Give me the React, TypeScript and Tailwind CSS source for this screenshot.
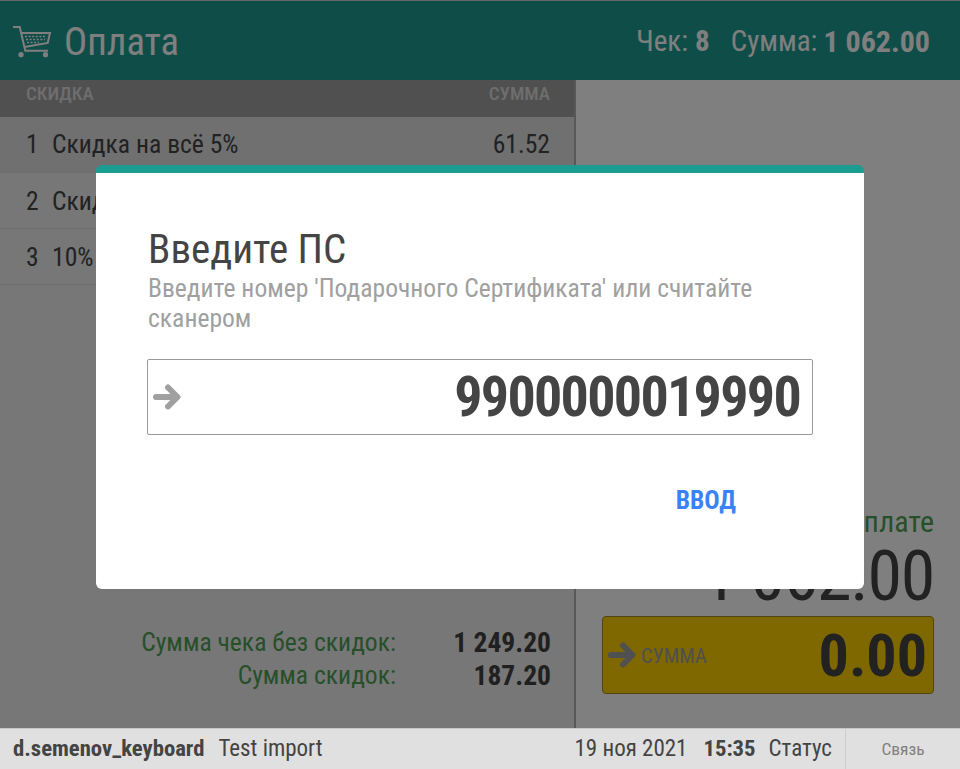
import React from "react";

const Arrow = ({ className }: { className: string }) => (
  <svg viewBox="0 0 28 28" className={className} fill="none" stroke="currentColor" strokeWidth="6" strokeLinecap="round" strokeLinejoin="round">
    <path d="M3 14H24M15 4.5L24.5 14L15 23.5" />
  </svg>
);

const Cart = () => (
  <svg viewBox="0 0 50 46" className="w-[50px] h-[46px] shrink-0" fill="none" stroke="#ffffff" strokeWidth="2">
    <path d="M6 9H12.7L18.3 32.7H41" />
    <path d="M14.5 15H43L40.7 25L17.5 29" />
    <path d="M18 18.5H39M19 21.5H38M20 24.5H32" strokeWidth="1.6" strokeDasharray="2 1.6" />
    <circle cx="14" cy="36.7" r="2.6" fill="#ffffff" stroke="none" />
    <circle cx="38.5" cy="36.7" r="2.6" fill="#ffffff" stroke="none" />
  </svg>
);

const rows = [
  ["1", "Скидка на всё 5%", "61.52", "bg-[#e0e0e0]", ""],
  ["2", "Скидка", "", "bg-[#eeeeee]", "pt-[1px]"],
  ["3", "10%", "", "bg-[#eeeeee]", "pt-[1px]"],
];

export default function App() {
  return (
    <div className="relative w-[960px] h-[769px] overflow-hidden bg-white flex flex-col font-['Roboto',sans-serif] font-stretch-condensed">
      <header className="h-[80px] shrink-0 bg-[#1f9b92] border-t border-[#cccccc] flex items-center justify-between pl-[7px] pr-[30px] text-white">
        <div className="flex items-center gap-[7px]">
          <Cart />
          <span className="text-[38.5px] leading-none pt-[3px]">Оплата</span>
        </div>
        <div className="flex items-center text-[29px] leading-none pt-[2px]">
          <span>Чек:</span>
          <b className="ml-[7px] font-bold">8</b>
          <span className="ml-[21px]">Сумма:</span>
          <b className="ml-[6px] font-bold text-[30px]">1 062.00</b>
        </div>
      </header>

      <main className="flex-1 flex min-h-0">
        <section className="w-[576px] shrink-0 bg-[#eeeeee] border-r-2 border-[#b0b0b0] flex flex-col">
          <div className="h-[37px] shrink-0 bg-[#a0a0a0] flex items-start justify-between pl-[26px] pr-[24px] text-[19px] leading-[28px] font-medium text-[#dddddd]">
            <span>СКИДКА</span>
            <span>СУММА</span>
          </div>
          {rows.map(([n, label, sum, bg, pad]) => (
            <div key={n} className={`h-[56px] shrink-0 ${bg} ${pad} border-b border-[#dddddd] flex items-center pl-[26px] pr-[24px] text-[25.6px] text-[#444444]`}>
              <span className="w-[26px]">{n}</span>
              <span className="flex-1">{label}</span>
              <span>{sum}</span>
            </div>
          ))}
          <div className="mt-auto pb-[36px] pr-[23px] grid grid-cols-[1fr_155px] text-[25.6px] leading-[33px] text-right">
            <span className="text-[#4f9f55]">Сумма чека без скидок:</span>
            <b className="font-bold text-[27.5px] text-[#404040]">1 249.20</b>
            <span className="text-[#4f9f55]">Сумма скидок:</span>
            <b className="font-bold text-[27.5px] text-[#404040]">187.20</b>
          </div>
        </section>

        <section className="flex-1 flex flex-col justify-end items-stretch pl-[26px] pr-[26px] pb-[34px] text-right">
          <div className="text-[30px] leading-[32px] text-[#4f9f55]">К оплате</div>
          <div className="text-[70px] tracking-[-1.3px] leading-[76px] text-[#444444]">1 062.00</div>
          <div className="h-[78px] mt-[2px] bg-[#ffd100] border border-[#a08a20] rounded-[4px] flex items-center pl-[5px] pr-[6px]">
            <Arrow className="w-[28px] h-[28px] text-[#a0a0a0]" />
            <span className="ml-[5px] pt-[2px] text-[20.5px] text-[#a0a0a0]">СУММА</span>
            <b className="ml-auto pt-[2px] text-[60px] leading-none font-bold text-[#444444]">0.00</b>
          </div>
        </section>
      </main>

      <footer className="h-[41px] shrink-0 bg-[#e0e0e0] border-t border-[#c8c8c8] flex items-center pl-[13px] text-[23px] text-[#444444] relative z-20">
        <b className="font-bold text-[22.7px]">d.semenov_keyboard</b>
        <span className="ml-[14px]">Test import</span>
        <span className="ml-auto">19 ноя 2021</span>
        <b className="ml-[16px] font-bold text-[22.7px]">15:35</b>
        <span className="ml-[13px]">Статус</span>
        <span className="ml-[13px] w-[115px] h-full border-l border-[#cccccc] flex items-center justify-center text-[17.4px] text-[#808080]">Связь</span>
      </footer>

      <div className="absolute inset-x-0 top-0 h-[728px] bg-black/50 z-10 flex items-start justify-center pt-[165px]">
        <div className="w-[768px] h-[424px] bg-white rounded-[6px] border-t-[8px] border-[#1a9c90] px-[51px] pt-[51px] flex flex-col">
          <h2 className="pl-[1px] text-[41px] leading-[50px] text-[#444444]">Введите ПС</h2>
          <p className="pl-[1px] -mt-[1px] text-[25.6px] leading-[30px] text-[#a0a0a0]">Введите номер 'Подарочного Сертификата' или считайте сканером</p>
          <div className="mt-[26px] h-[76px] border border-[#999999] rounded-[2px] flex items-center justify-between pl-[5px] pr-[12px]">
            <Arrow className="w-[28px] h-[28px] text-[#a0a0a0]" />
            <span className="-mt-[1px] text-[56px] tracking-[-1.7px] font-bold text-[#444444] leading-none">9900000019990</span>
          </div>
          <button className="self-end mt-[53px] mr-[77px] text-[25.5px] font-bold leading-none text-[#3b82f6]">ВВОД</button>
        </div>
      </div>
    </div>
  );
}
